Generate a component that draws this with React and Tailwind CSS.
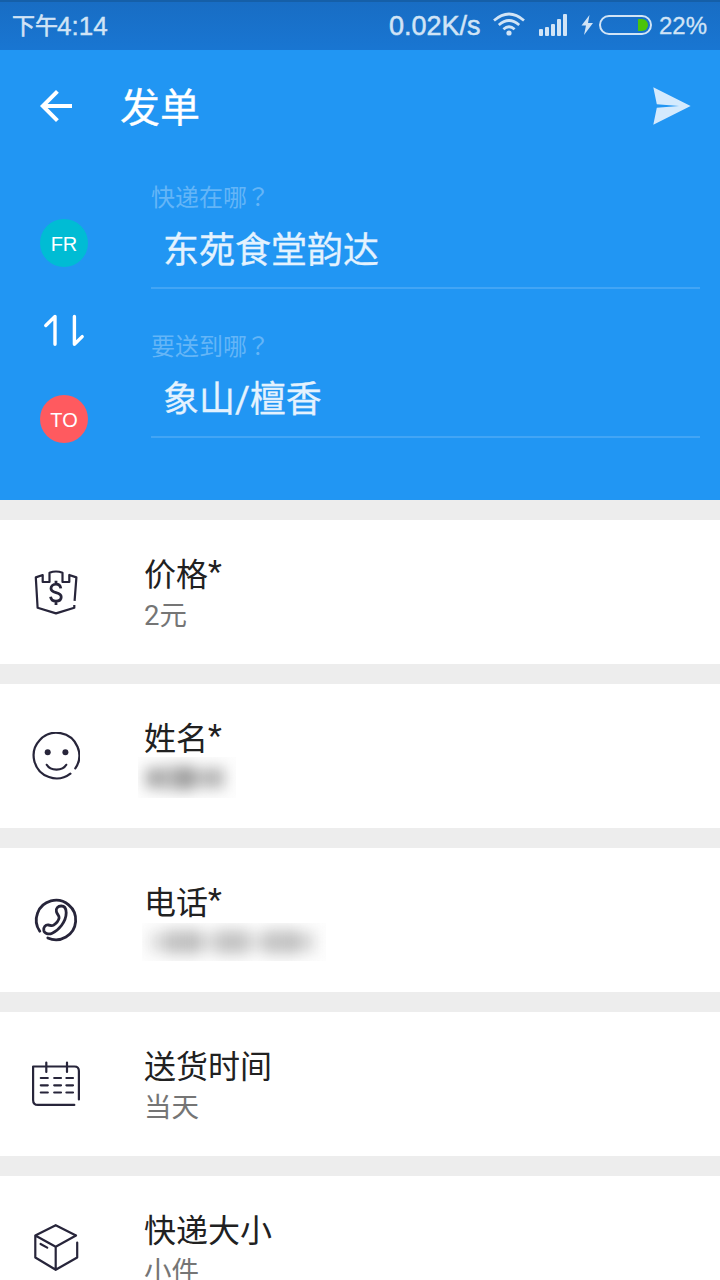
import React from 'react'

function Icon({ children }){
  return (
    <svg viewBox="0 0 48 48" className="w-12 h-12 shrink-0" fill="none" stroke="#27253a" strokeWidth="2.2" strokeLinecap="round" strokeLinejoin="round">
      {children}
    </svg>
  )
}

const PriceIcon = () => (
  <Icon>
    <path strokeLinecap="butt" d="M42.6 32.8L44.4 9.4L37.3 7V14H30.5V4.8Q24 2.2 17.5 4.8V14H10.7V7L3.8 9.4L5.6 39.8L24 45.4L42.3 39.8V37" />
    <path strokeWidth="2.8" strokeLinecap="butt" d="M28.8 20.4C28.4 17.9 26.5 16.2 24 16.2C21 16.2 19 18 19 20.6C19 26.3 29.2 23 29.2 29C29.2 31.8 27 33.2 24 33.2C21 33.2 19 31.8 18.6 28.8M24 12.8V16.4M24 33.4V36.9" />
  </Icon>
)

const FaceIcon = () => (
  <Icon>
    <path d="M43.3 36.4A22.8 22.8 0 1 0 38.4 41.6" />
    <circle cx="15.7" cy="20.3" r="3" fill="#27253a" stroke="none" />
    <circle cx="33.4" cy="20.3" r="3" fill="#27253a" stroke="none" />
    <path d="M14.7 32.8C18.5 39.2 30.5 39.2 34.3 32.8" />
  </Icon>
)

const PhoneIcon = () => (
  <Icon>
    <g strokeWidth="2.8">
      <path d="M7.8 35.2A19.7 19.7 0 1 1 15.8 41.9" />
      <path d="M24.4 15.6C23.5 12.4 26 10 29.2 10C32.7 10 34.2 13 34.2 16.8C34.2 26 26.2 34.6 20.2 37.2C16.6 38.8 12.4 37.6 11.8 34.6C11.2 31.2 13.4 28.6 16.5 29C18.8 29.3 19.6 30.4 21.6 29.1C24 27.5 26.6 24.4 27.1 22C27.6 19.6 25.2 18.8 24.4 15.6Z" />
    </g>
  </Icon>
)

const CalendarIcon = () => (
  <Icon>
    <path d="M42.3 44.9H6Q1.1 44.9 1.1 39.9V6.5H42.5Q46.9 6.5 46.9 11V39.5M14.3 2.5V12M35 2.5V12" />
    <path d="M8.8 18H15.8M22.2 18H29M34.4 18H41M8.8 25.3H15.8M22.2 25.3H29M34.4 25.3H41M8.8 32.5H15.8M22.2 32.5H29M34.4 32.5H41" />
  </Icon>
)

const BoxIcon = () => (
  <Icon>
    <path d="M44 11.5L23.7 22.7L3.3 11.5L23.7 1.2L44 11.5M3.3 11.5V33.5L23.7 45.8L45.2 33.5V18.5M23.7 22.7V45.8M8.6 20L15.2 23.6" />
  </Icon>
)

// privacy strip: soft grey smudges instead of the value
function Hidden({ className, marks }){
  return (
    <div className={`flex items-center overflow-hidden bg-[#fdfdfd] ${className}`}>
      <div className="flex w-full items-center justify-between pl-2 pr-3 blur-[7px]">
        {marks.map((m, i) => <span key={i} className={`w-4 ${m}`} />)}
      </div>
    </div>
  )
}

const rows = [
  { title: '价格', required: true, value: '2元', icon: <PriceIcon /> },
  { title: '姓名', required: true, icon: <FaceIcon />, hidden: (
    <Hidden className="-ml-1.5 -mt-0.5 w-[98px] h-[41px]" marks={['h-5 bg-[#a8a8a8]', 'h-6 bg-[#bcbcbc]', 'h-6 bg-[#9c9c9c]', 'h-5 bg-[#c0c0c0]', 'h-5 bg-[#b4b4b4]']} />
  ) },
  { title: '电话', required: true, icon: <PhoneIcon />, hidden: (
    <Hidden className="-ml-0.5 w-[184px] h-[38px]" marks={['h-5 bg-[#dcdcdc]', 'h-6 bg-[#c0c0c0]', 'h-6 bg-[#bcbcbc]', 'h-5 bg-[#dadada]', 'h-6 bg-[#c4c4c4]', 'h-6 bg-[#c4c4c4]', 'h-5 bg-[#dedede]', 'h-6 bg-[#c2c2c2]', 'h-6 bg-[#c0c0c0]', 'h-5 bg-[#d4d4d4]']} />
  ) },
  { title: '送货时间', value: '当天', icon: <CalendarIcon /> },
  { title: '快递大小', value: '小件', icon: <BoxIcon /> },
]

function StatusBar(){
  return (
    <div className="h-[50px] flex items-center justify-between pl-3 pr-3 border-t-2 border-[#155fa8] bg-linear-to-b from-[#186dc4] to-[#1976d2] text-[#d1e4f6] font-['Liberation_Sans','Noto_Sans_CJK_SC',sans-serif]">
      <div className="flex items-center leading-none whitespace-nowrap">
        <span className="text-[23px] [-webkit-text-stroke:0.6px_#d1e4f6]">下午</span>
        <span className="text-[26px] -ml-px [-webkit-text-stroke:0.4px_#d1e4f6]">4:14</span>
      </div>
      <div className="flex items-center leading-none">
        <span className="text-[27px] w-[92px] whitespace-nowrap [-webkit-text-stroke:0.5px_#d1e4f6]">0.02K/s</span>
        <svg viewBox="0 0 32 24" className="ml-3 mb-1 w-8 h-6" fill="none" stroke="currentColor" strokeWidth="2.7">
          <path d="M1 8.5Q16 -4.5 31 8.5M5.8 13Q16 4 26.2 13M10.4 17.2Q16 12.3 21.6 17.2" />
          <circle cx="16" cy="21" r="2.6" fill="currentColor" stroke="none" />
        </svg>
        <div className="ml-3.5 mb-0.5 flex items-end gap-0.5">
          <i className="w-1 h-[7px] rounded-[1px] bg-[#d1e4f6]" />
          <i className="w-1 h-[9px] rounded-[1px] bg-[#d1e4f6]" />
          <i className="w-1 h-3 rounded-[1px] bg-[#d1e4f6]" />
          <i className="w-1 h-[17px] rounded-[1px] bg-[#d1e4f6]" />
          <i className="w-1 h-[22px] rounded-[1px] bg-[#d1e4f6]" />
        </div>
        <svg viewBox="0 0 12 20" className="ml-[14px] mb-0.5 w-3 h-5" fill="currentColor">
          <path d="M8.5 0L0.5 10.5H5L3 20L12 8H7Z" />
        </svg>
        <div className="ml-1.5 mb-0.5 w-[53px] h-5 rounded-full border-2 border-[#d1e4f6] p-0.5 flex justify-end">
          <span className="w-2.5 h-full rounded-r-full bg-[#4bc40a]" />
        </div>
        <span className="ml-[7px] text-[24px] w-[49px] [-webkit-text-stroke:0.3px_#d1e4f6]">22%</span>
      </div>
    </div>
  )
}

function Field({ label, value }){
  return (
    <div className="h-[149px] flex flex-col border-b-2 border-[#42a5f5]">
      <span className="mt-10 h-8 text-[24px] leading-8 text-[#64b5f7]">
        {label}<span className="-ml-px font-['Noto_Sans_CJK_TC',sans-serif]">？</span>
      </span>
      <span className="mt-[13px] h-[52px] pl-3 text-[36px] leading-[52px] text-[#e4f2fe] [-webkit-text-stroke:0.3px_#e4f2fe]">{value}</span>
    </div>
  )
}

export default function App(){
  return (
    <div className="w-[720px] h-[1280px] overflow-hidden bg-[#ededed] font-[Roboto,'Noto_Sans_CJK_SC',sans-serif]">
      <StatusBar />
      <header className="h-[450px] bg-[#2196f3] text-white">
        <div className="h-[90px] pt-[22px] pl-8 pr-[29px] flex items-center">
          <svg viewBox="0 0 24 24" className="w-12 h-12" fill="currentColor">
            <path d="M20 11H7.83l5.59-5.59L12 4l-8 8 8 8 1.41-1.41L7.83 13H20v-2z" />
          </svg>
          <h1 className="ml-10 mt-1.5 flex-1 text-[40px] leading-[48px] [-webkit-text-stroke:0.3px_white]">发单</h1>
          <svg viewBox="0 0 38 38" className="w-[38px] h-[38px]" fill="#d4eafd">
            <path d="M0.3 0.3L37.6 19L0.3 37.7L3.8 20.7L26 19L3.8 17.3Z" />
          </svg>
        </div>
        <div className="flex pr-5">
          <div className="w-[151px] pl-10 pt-[79px] flex flex-col items-start font-['Liberation_Sans',sans-serif]">
            <div className="w-12 h-12 rounded-full bg-[#00bcd4] flex items-center justify-center pt-0.5 text-[20px] leading-none">FR</div>
            <svg viewBox="0 0 48 36" className="my-[46px] w-12 h-9" fill="none" stroke="currentColor" strokeWidth="3.4" strokeLinecap="round" strokeLinejoin="round">
              <path d="M5.8 12.5L15 3.5V31.2M34.4 3.5V31.2L42.2 23.6" />
            </svg>
            <div className="w-12 h-12 rounded-full bg-[#ff5a5f] flex items-center justify-center pt-0.5 text-[20px] leading-none">TO</div>
          </div>
          <div className="flex-1">
            <Field label="快递在哪" value="东苑食堂韵达" />
            <Field label="要送到哪" value="象山/檀香" />
          </div>
        </div>
      </header>
      <main className="pt-5 flex flex-col gap-5">
        {rows.map(r => (
          <section key={r.title} className="h-36 shrink-0 bg-white flex items-start pl-8">
            <div className="mt-12">{r.icon}</div>
            <div className="ml-16 pt-[35px]">
              <div className="h-10 text-[32px] leading-10 text-[#212121]">
                {r.title}{r.required && <span className="align-[4px] leading-none">*</span>}
              </div>
              {r.hidden || <div className="h-10 pt-px text-[27.5px] leading-10 text-[#757575]">{r.value}</div>}
            </div>
          </section>
        ))}
      </main>
    </div>
  )
}
